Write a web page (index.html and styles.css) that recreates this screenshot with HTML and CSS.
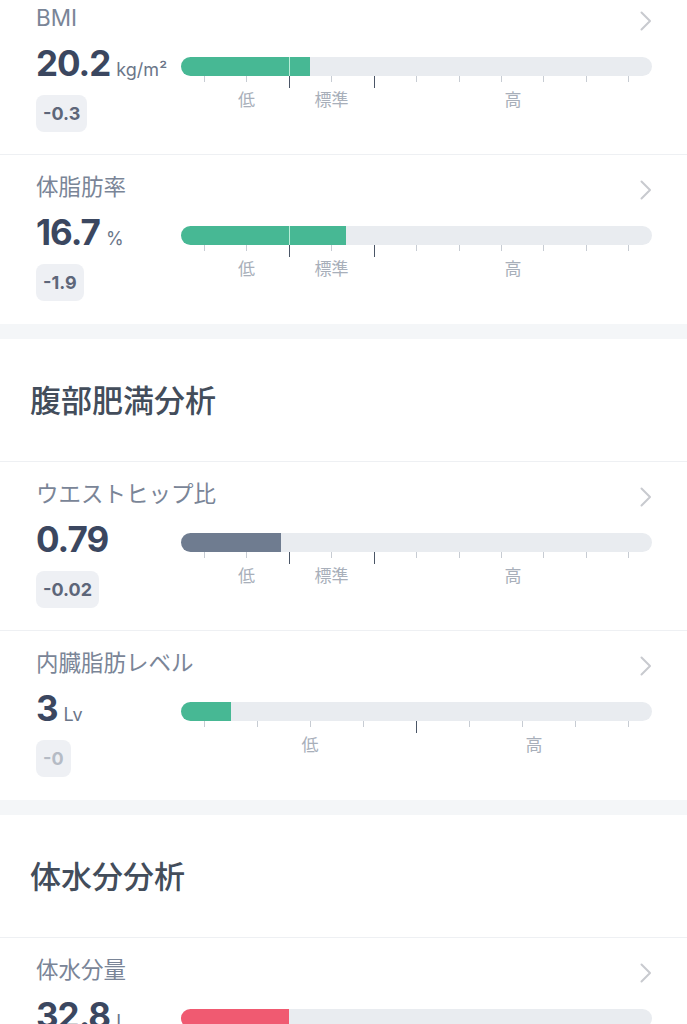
FILE: index.html
```html
<!DOCTYPE html>
<html lang="ja">
<head>
    <meta charset="UTF-8">
    <meta name="viewport" content="width=device-width, initial-scale=1.0">
    <title>体組成</title>
    <link rel="stylesheet" href="styles.css">
</head>
<body>
<div class="screen">
<div class="page">

    <div class="group">
        <div class="metric">
            <div class="metric-head">
                <div class="metric-name">BMI</div>
                <svg class="chevron" viewBox="0 0 12 20"><path d="M1.5 1.5 L10 10 L1.5 18.5" /></svg>
            </div>
            <div class="metric-body">
                <div class="metric-left">
                    <div class="value"><b>20.2</b><span>kg/m²</span></div>
                    <div class="badge">-0.3</div>
                </div>
                <div class="metric-right">
                    <div class="bar">
                        <div class="fill green" style="width: 27.4%"></div>
                        <div class="marker" style="left: 22.9%"></div>
                    </div>
                    <div class="ticks">
                        <i></i><i></i><i class="major"></i><i></i><i class="major"></i><i></i><i></i><i></i><i></i><i></i><i></i>
                    </div>
                    <div class="scale">
                        <span style="flex: 85">低</span>
                        <span style="flex: 85">標準</span>
                        <span style="flex: 278">高</span>
                    </div>
                </div>
            </div>
        </div>

        <div class="metric">
            <div class="metric-head">
                <div class="metric-name">体脂肪率</div>
                <svg class="chevron" viewBox="0 0 12 20"><path d="M1.5 1.5 L10 10 L1.5 18.5" /></svg>
            </div>
            <div class="metric-body">
                <div class="metric-left">
                    <div class="value"><b>16.7</b><span>%</span></div>
                    <div class="badge">-1.9</div>
                </div>
                <div class="metric-right">
                    <div class="bar">
                        <div class="fill green" style="width: 35%"></div>
                        <div class="marker" style="left: 22.9%"></div>
                    </div>
                    <div class="ticks">
                        <i></i><i></i><i class="major"></i><i></i><i class="major"></i><i></i><i></i><i></i><i></i><i></i><i></i>
                    </div>
                    <div class="scale">
                        <span style="flex: 85">低</span>
                        <span style="flex: 85">標準</span>
                        <span style="flex: 278">高</span>
                    </div>
                </div>
            </div>
        </div>
    </div>

    <div class="band"></div>
    <h2 class="section-title">腹部肥満分析</h2>

    <div class="group">
        <div class="metric">
            <div class="metric-head">
                <div class="metric-name">ウエストヒップ比</div>
                <svg class="chevron" viewBox="0 0 12 20"><path d="M1.5 1.5 L10 10 L1.5 18.5" /></svg>
            </div>
            <div class="metric-body">
                <div class="metric-left">
                    <div class="value"><b>0.79</b></div>
                    <div class="badge">-0.02</div>
                </div>
                <div class="metric-right">
                    <div class="bar">
                        <div class="fill slate" style="width: 21.2%"></div>
                    </div>
                    <div class="ticks">
                        <i></i><i></i><i class="major"></i><i></i><i class="major"></i><i></i><i></i><i></i><i></i><i></i><i></i>
                    </div>
                    <div class="scale">
                        <span style="flex: 85">低</span>
                        <span style="flex: 85">標準</span>
                        <span style="flex: 278">高</span>
                    </div>
                </div>
            </div>
        </div>

        <div class="metric">
            <div class="metric-head">
                <div class="metric-name">内臓脂肪レベル</div>
                <svg class="chevron" viewBox="0 0 12 20"><path d="M1.5 1.5 L10 10 L1.5 18.5" /></svg>
            </div>
            <div class="metric-body">
                <div class="metric-left">
                    <div class="value"><b>3</b><span>Lv</span></div>
                    <div class="badge zero">-0</div>
                </div>
                <div class="metric-right">
                    <div class="bar">
                        <div class="fill green" style="width: 10.6%"></div>
                    </div>
                    <div class="ticks">
                        <i></i><i></i><i></i><i></i><i class="major"></i><i></i><i></i><i></i><i></i>
                    </div>
                    <div class="scale">
                        <span style="flex: 212">低</span>
                        <span style="flex: 236">高</span>
                    </div>
                </div>
            </div>
        </div>
    </div>

    <div class="band"></div>
    <h2 class="section-title">体水分分析</h2>

    <div class="group">
        <div class="metric">
            <div class="metric-head">
                <div class="metric-name">体水分量</div>
                <svg class="chevron" viewBox="0 0 12 20"><path d="M1.5 1.5 L10 10 L1.5 18.5" /></svg>
            </div>
            <div class="metric-body">
                <div class="metric-left">
                    <div class="value"><b>32.8</b><span>L</span></div>
                    <div class="badge">-0.4</div>
                </div>
                <div class="metric-right">
                    <div class="bar">
                        <div class="fill red" style="width: 22.9%"></div>
                    </div>
                    <div class="ticks">
                        <i></i><i></i><i class="major"></i><i></i><i class="major"></i><i></i><i></i><i></i><i></i><i></i><i></i>
                    </div>
                    <div class="scale">
                        <span style="flex: 85">低</span>
                        <span style="flex: 85">標準</span>
                        <span style="flex: 278">高</span>
                    </div>
                </div>
            </div>
        </div>
    </div>

</div>
</div>
</body>
</html>
```

FILE: styles.css
```css
html, body {
    margin: 0;
    padding: 0;
    background: #fff;
}
body {
    font-family: Inter, "Noto Sans CJK JP", sans-serif;
}
.screen {
    height: 1024px;
    overflow: hidden;
}
.page {
    margin-top: -14px;
}
.metric {
    box-sizing: border-box;
    height: 169px;
    padding: 21px 35px 0 36px;
    border-bottom: 1px solid #eef0f3;
}
.metric:last-child {
    border-bottom: none;
}
.metric-head {
    display: flex;
    justify-content: space-between;
    align-items: center;
    height: 22px;
}
.metric-name {
    font-size: 22.5px;
    line-height: 22px;
    color: #7a8597;
}
.chevron {
    width: 12px;
    height: 20px;
    margin-top: 6px;
    fill: none;
    stroke: #c8cacf;
    stroke-width: 2;
    stroke-linecap: round;
    stroke-linejoin: round;
}
.metric-body {
    display: flex;
    margin-top: 14px;
}
.metric-left {
    width: 145px;
    flex: none;
}
.value {
    height: 40px;
    line-height: 40px;
    color: #3b4760;
    white-space: nowrap;
}
.value b {
    font-size: 35px;
    font-weight: 700;
    letter-spacing: -1px;
}
.value span {
    font-size: 18px;
    color: #6b7689;
    margin-left: 6px;
}
.badge {
    display: inline-block;
    margin-top: 12px;
    height: 37px;
    line-height: 37px;
    padding: 0 7px;
    border-radius: 8px;
    background: #eef0f4;
    font-size: 18px;
    font-weight: 700;
    color: #5d6679;
}
.badge.zero {
    color: #b5bbc5;
}
.metric-right {
    flex: 1;
    margin-top: 14px;
}
.bar {
    position: relative;
    display: flex;
    height: 19px;
    border-radius: 10px;
    background: #e9ecf0;
    overflow: hidden;
}
.fill {
    height: 100%;
}
.fill.green {
    background: #47b894;
}
.fill.slate {
    background: #6f7c90;
}
.fill.red {
    background: #f05a71;
}
.marker {
    position: absolute;
    top: 0;
    bottom: 0;
    width: 1px;
    background: #b8eed8;
}
.ticks {
    display: flex;
    justify-content: space-between;
    align-items: flex-start;
    height: 12px;
    padding: 0 23px;
}
.ticks i {
    width: 1px;
    height: 6px;
    background: #c7ccd3;
}
.ticks i.major {
    width: 1.5px;
    height: 12px;
    background: #4a5566;
}
.scale {
    display: flex;
    padding-left: 23px;
    margin-top: 2px;
    font-size: 17px;
    line-height: 20px;
    color: #a8afba;
}
.scale span {
    text-align: center;
}
.band {
    height: 15px;
    background: #f4f6f8;
}
.section-title {
    box-sizing: border-box;
    display: flex;
    align-items: center;
    height: 123px;
    margin: 0;
    padding: 0 0 4px 30px;
    border-bottom: 1px solid #eef0f3;
    font-size: 31px;
    font-weight: 500;
    color: #434d5b;
}
```
